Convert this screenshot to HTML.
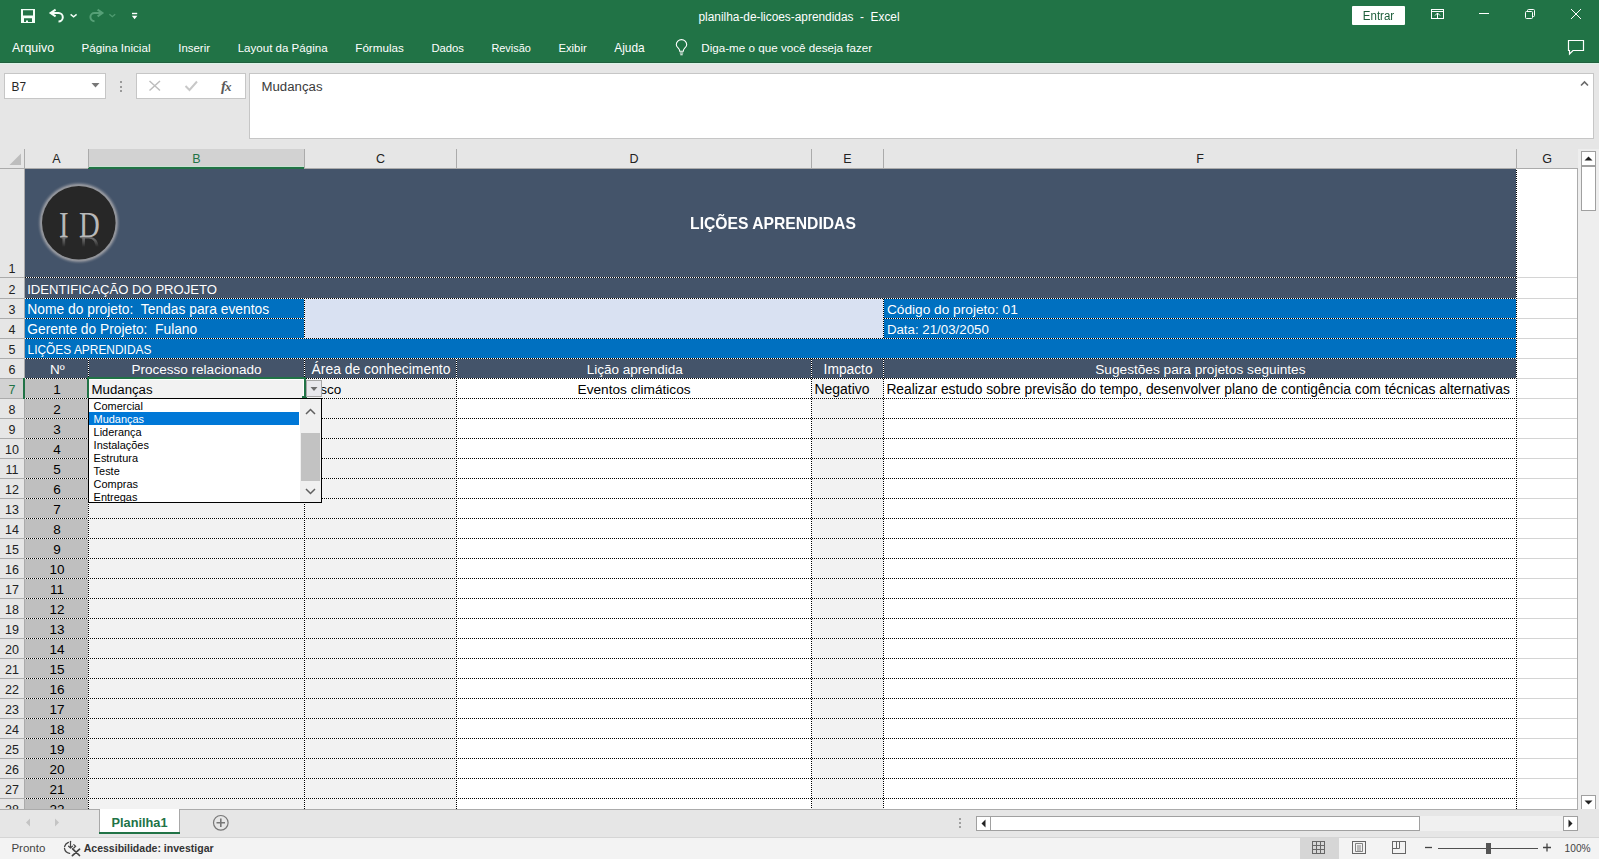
<!DOCTYPE html>
<html><head><meta charset="utf-8"><title>planilha-de-licoes-aprendidas - Excel</title>
<style>
html,body{margin:0;padding:0;}
body{width:1599px;height:859px;overflow:hidden;position:relative;background:#E6E6E6;font-family:"Liberation Sans",sans-serif;}
body>div{position:absolute;}
.t{white-space:pre;}
.hd{height:1px;}
.vd{width:1px;}
svg{position:absolute;}
</style></head><body>
<div style="left:0px;top:0px;width:1599px;height:63px;background:#217346"></div>
<div style="left:0px;top:62px;width:1599px;height:1px;background:#225F3E"></div>
<div style="left:0px;top:63px;width:1599px;height:1px;background:#DBF4E7"></div>
<svg style="position:absolute;left:0px;top:0px" width="160" height="32">
<path fill="#F4FFF8" fill-rule="evenodd" d="M21 9 H35 V23 H21 Z M23 10.2 H33 V15.6 H23 Z M24 18.2 H32 V22 H28 V20.6 H26 V22 H24 Z"/>
<path d="M55.6 9.6 L50.6 13 L55.6 16.4 M51.5 13 H58.5 A4.3 4.3 0 0 1 58.5 21.6" fill="none" stroke="#F4FFF8" stroke-width="2"/>
<path d="M70.6 14.4 L73.6 16.8 L76.6 14.4" fill="none" stroke="#F4FFF8" stroke-width="1.4"/>
<path d="M97.6 9.6 L102.4 13 L97.6 16.4 M101.5 13 H94.5 A4.1 4.1 0 0 0 94.5 21.2" fill="none" stroke="#56A077" stroke-width="2"/>
<path d="M109.4 14.2 L112.3 16.7 L115.2 14.2" fill="none" stroke="#4E9A6F" stroke-width="1.4"/>
<rect x="132" y="12.8" width="5.2" height="1.4" fill="#fff"/>
<path d="M131.8 15.8 H137.4 L134.6 19.2 Z" fill="#fff"/>
</svg>
<div class="t" style="left:698.5px;top:11.96px;font-size:11.86px;line-height:11.86px;color:#fff;font-weight:400;font-family:'Liberation Sans';white-space:pre">planilha-de-licoes-aprendidas&nbsp; -&nbsp; Excel</div>
<div style="left:1352px;top:6px;width:53px;height:19px;background:#fff;border-radius:1px"></div>
<div class="t" style="left:1348.5px;top:11.27px;width:60px;text-align:center;font-size:11.5px;line-height:11.5px;color:#1D5E3A;font-weight:400;font-family:'Liberation Sans';transform:scaleY(1.08);transform-origin:50% 80%">Entrar</div>
<svg style="position:absolute;left:1420px;top:0px" width="179" height="32">
<g fill="none" stroke="#fff" stroke-width="1">
<rect x="11.5" y="9.5" width="12" height="9"/>
<path d="M11.5 11.5 H23.5"/>
<path d="M17.5 18.5 V13 M15 15.5 L17.5 13 L20 15.5"/>
<path d="M59 13.5 H69"/>
<rect x="105.5" y="11.5" width="7" height="7" rx="1"/>
<path d="M107.5 11.5 V10.5 Q107.5 9.5 108.5 9.5 H113.5 Q114.5 9.5 114.5 10.5 V15.5 Q114.5 16.5 113.5 16.5 H112.5"/>
<path d="M151 9 L161 19 M161 9 L151 19"/>
</g>
</svg>
<div class="t" style="left:12.1px;top:41.51px;font-size:12.39px;line-height:12.39px;color:#fff;font-weight:400;font-family:'Liberation Sans';">Arquivo</div>
<div class="t" style="left:81.5px;top:42.18px;font-size:11.6px;line-height:11.6px;color:#fff;font-weight:400;font-family:'Liberation Sans';">Página Inicial</div>
<div class="t" style="left:178.3px;top:43.34px;font-size:11.41px;line-height:11.41px;color:#fff;font-weight:400;font-family:'Liberation Sans';">Inserir</div>
<div class="t" style="left:237.7px;top:43.21px;font-size:11.56px;line-height:11.56px;color:#fff;font-weight:400;font-family:'Liberation Sans';">Layout da Página</div>
<div class="t" style="left:355.3px;top:42.15px;font-size:11.64px;line-height:11.64px;color:#fff;font-weight:400;font-family:'Liberation Sans';">Fórmulas</div>
<div class="t" style="left:431.4px;top:43.45px;font-size:11.28px;line-height:11.28px;color:#fff;font-weight:400;font-family:'Liberation Sans';">Dados</div>
<div class="t" style="left:491.4px;top:42.75px;font-size:10.93px;line-height:10.93px;color:#fff;font-weight:400;font-family:'Liberation Sans';">Revisão</div>
<div class="t" style="left:558.4px;top:43.42px;font-size:11.32px;line-height:11.32px;color:#fff;font-weight:400;font-family:'Liberation Sans';">Exibir</div>
<div class="t" style="left:614.3px;top:42.94px;font-size:11.89px;line-height:11.89px;color:#fff;font-weight:400;font-family:'Liberation Sans';">Ajuda</div>
<div class="t" style="left:701.3px;top:42.14px;font-size:11.65px;line-height:11.65px;color:#fff;font-weight:400;font-family:'Liberation Sans';">Diga-me o que você deseja fazer</div>
<svg style="position:absolute;left:670px;top:36px" width="24" height="24">
<g fill="none" stroke="#fff" stroke-width="1.1">
<path d="M9.7 15.2 Q9.7 13.6 8.3 12.2 Q6.3 10.3 6.3 8.8 A5.2 5.2 0 0 1 16.7 8.8 Q16.7 10.3 14.7 12.2 Q13.3 13.6 13.3 15.2 Z"/>
<path d="M9.8 17 H13.2 M10.3 18.8 H12.7"/>
</g></svg>
<svg style="position:absolute;left:1560px;top:34px" width="30" height="24">
<path d="M8.5 6.5 H23.5 V16.5 H13 L9.5 20 V16.5 H8.5 Z" fill="none" stroke="#fff" stroke-width="1.2"/>
</svg>
<div style="left:0px;top:64px;width:1599px;height:85px;background:#E6E6E6"></div>
<div style="left:4px;top:73px;width:102px;height:26px;background:#fff;border:1px solid #C6C6C6;box-sizing:border-box"></div>
<div class="t" style="left:11.5px;top:81.97px;font-size:11.85px;line-height:11.85px;color:#262626;font-weight:400;font-family:'Liberation Sans';">B7</div>
<svg style="position:absolute;left:89px;top:80px" width="14" height="10"><path d="M2.5 3 H10.5 L6.5 7.5 Z" fill="#777"/></svg>
<div style="left:120px;top:81px;width:2px;height:2px;background:#9A9A9A"></div>
<div style="left:120px;top:86px;width:2px;height:2px;background:#9A9A9A"></div>
<div style="left:120px;top:90px;width:2px;height:2px;background:#9A9A9A"></div>
<div style="left:136px;top:73px;width:110px;height:26px;background:#fff;border:1px solid #C6C6C6;box-sizing:border-box"></div>
<svg style="position:absolute;left:136px;top:73px" width="110" height="26">
<path d="M13.5 8 L24 17.5 M24 8 L13.5 17.5" stroke="#BDBDBD" stroke-width="1.5" fill="none"/>
<path d="M49.5 13 L53.5 17 L61 8.5" stroke="#C8C8C8" stroke-width="2" fill="none"/>
</svg>
<div class="t" style="left:221px;top:79.3px;font-size:15px;line-height:15px;color:#5A5A5A;font-weight:700;font-family:'Liberation Serif';"><i>f</i><i style='font-size:13px;margin-left:-1px'>x</i></div>
<div style="left:249px;top:73px;width:1345px;height:66px;background:#fff;border:1px solid #C6C6C6;box-sizing:border-box"></div>
<div class="t" style="left:261.5px;top:79.81px;font-size:13.22px;line-height:13.22px;color:#3B3B3B;font-weight:400;font-family:'Liberation Sans';">Mudanças</div>
<svg style="position:absolute;left:1578px;top:78px" width="14" height="12"><path d="M3 7.5 L6.5 4 L10 7.5" fill="none" stroke="#6A6A6A" stroke-width="1.6"/></svg>
<div style="left:0px;top:149px;width:1578px;height:20px;background:#E6E6E6"></div>
<div style="left:0px;top:168px;width:1578px;height:1px;background:#ABABAB"></div>
<svg style="position:absolute;left:0px;top:149px" width="24" height="19"><path d="M9.5 16 L21 16 L21 4.5 Z" fill="#BDBDBD"/></svg>
<div style="left:24px;top:149px;width:1px;height:660px;background:#ABABAB"></div>
<div class="t" style="left:26.5px;top:153.42px;width:60px;text-align:center;font-size:12.5px;line-height:12.5px;color:#222;font-weight:400;font-family:'Liberation Sans';">A</div>
<div style="left:88px;top:149px;width:216px;height:18px;background:#D2D2D2"></div>
<div style="left:88px;top:166px;width:216px;height:1px;background:#C9E3D2"></div>
<div style="left:88px;top:167px;width:216px;height:2px;background:#217346"></div>
<div class="t" style="left:166.5px;top:153.42px;width:60px;text-align:center;font-size:12.5px;line-height:12.5px;color:#217346;font-weight:400;font-family:'Liberation Sans';">B</div>
<div style="left:88px;top:149px;width:1px;height:19px;background:#ABABAB"></div>
<div class="t" style="left:350.5px;top:153.42px;width:60px;text-align:center;font-size:12.5px;line-height:12.5px;color:#222;font-weight:400;font-family:'Liberation Sans';">C</div>
<div style="left:304px;top:149px;width:1px;height:19px;background:#ABABAB"></div>
<div class="t" style="left:604.0px;top:153.42px;width:60px;text-align:center;font-size:12.5px;line-height:12.5px;color:#222;font-weight:400;font-family:'Liberation Sans';">D</div>
<div style="left:456px;top:149px;width:1px;height:19px;background:#ABABAB"></div>
<div class="t" style="left:817.5px;top:153.42px;width:60px;text-align:center;font-size:12.5px;line-height:12.5px;color:#222;font-weight:400;font-family:'Liberation Sans';">E</div>
<div style="left:811px;top:149px;width:1px;height:19px;background:#ABABAB"></div>
<div class="t" style="left:1170.0px;top:153.42px;width:60px;text-align:center;font-size:12.5px;line-height:12.5px;color:#222;font-weight:400;font-family:'Liberation Sans';">F</div>
<div style="left:883px;top:149px;width:1px;height:19px;background:#ABABAB"></div>
<div class="t" style="left:1517.0px;top:153.42px;width:60px;text-align:center;font-size:12.5px;line-height:12.5px;color:#222;font-weight:400;font-family:'Liberation Sans';">G</div>
<div style="left:1516px;top:149px;width:1px;height:19px;background:#ABABAB"></div>
<div style="left:25px;top:169px;width:1553px;height:640px;background:#fff"></div>
<div style="left:0px;top:169px;width:24px;height:640px;background:#E6E6E6"></div>
<div style="left:0px;top:277px;width:24px;height:1px;background:#ABABAB"></div>
<div class="t" style="left:-3.0px;top:263.42px;width:30px;text-align:center;font-size:12.5px;line-height:12.5px;color:#222;font-weight:400;font-family:'Liberation Sans';">1</div>
<div style="left:0px;top:298px;width:24px;height:1px;background:#ABABAB"></div>
<div class="t" style="left:-3.0px;top:284.42px;width:30px;text-align:center;font-size:12.5px;line-height:12.5px;color:#222;font-weight:400;font-family:'Liberation Sans';">2</div>
<div style="left:0px;top:318px;width:24px;height:1px;background:#ABABAB"></div>
<div class="t" style="left:-3.0px;top:304.42px;width:30px;text-align:center;font-size:12.5px;line-height:12.5px;color:#222;font-weight:400;font-family:'Liberation Sans';">3</div>
<div style="left:0px;top:338px;width:24px;height:1px;background:#ABABAB"></div>
<div class="t" style="left:-3.0px;top:324.42px;width:30px;text-align:center;font-size:12.5px;line-height:12.5px;color:#222;font-weight:400;font-family:'Liberation Sans';">4</div>
<div style="left:0px;top:358px;width:24px;height:1px;background:#ABABAB"></div>
<div class="t" style="left:-3.0px;top:344.42px;width:30px;text-align:center;font-size:12.5px;line-height:12.5px;color:#222;font-weight:400;font-family:'Liberation Sans';">5</div>
<div style="left:0px;top:378px;width:24px;height:1px;background:#ABABAB"></div>
<div class="t" style="left:-3.0px;top:364.42px;width:30px;text-align:center;font-size:12.5px;line-height:12.5px;color:#222;font-weight:400;font-family:'Liberation Sans';">6</div>
<div style="left:0px;top:398px;width:24px;height:1px;background:#ABABAB"></div>
<div style="left:0px;top:379px;width:23px;height:19px;background:#D2D2D2"></div>
<div style="left:23px;top:378px;width:2px;height:21px;background:#217346"></div>
<div class="t" style="left:-3.0px;top:384.42px;width:30px;text-align:center;font-size:12.5px;line-height:12.5px;color:#217346;font-weight:400;font-family:'Liberation Sans';">7</div>
<div style="left:0px;top:418px;width:24px;height:1px;background:#ABABAB"></div>
<div class="t" style="left:-3.0px;top:404.42px;width:30px;text-align:center;font-size:12.5px;line-height:12.5px;color:#222;font-weight:400;font-family:'Liberation Sans';">8</div>
<div style="left:0px;top:438px;width:24px;height:1px;background:#ABABAB"></div>
<div class="t" style="left:-3.0px;top:424.42px;width:30px;text-align:center;font-size:12.5px;line-height:12.5px;color:#222;font-weight:400;font-family:'Liberation Sans';">9</div>
<div style="left:0px;top:458px;width:24px;height:1px;background:#ABABAB"></div>
<div class="t" style="left:-3.0px;top:444.42px;width:30px;text-align:center;font-size:12.5px;line-height:12.5px;color:#222;font-weight:400;font-family:'Liberation Sans';">10</div>
<div style="left:0px;top:478px;width:24px;height:1px;background:#ABABAB"></div>
<div class="t" style="left:-3.0px;top:464.42px;width:30px;text-align:center;font-size:12.5px;line-height:12.5px;color:#222;font-weight:400;font-family:'Liberation Sans';">11</div>
<div style="left:0px;top:498px;width:24px;height:1px;background:#ABABAB"></div>
<div class="t" style="left:-3.0px;top:484.42px;width:30px;text-align:center;font-size:12.5px;line-height:12.5px;color:#222;font-weight:400;font-family:'Liberation Sans';">12</div>
<div style="left:0px;top:518px;width:24px;height:1px;background:#ABABAB"></div>
<div class="t" style="left:-3.0px;top:504.42px;width:30px;text-align:center;font-size:12.5px;line-height:12.5px;color:#222;font-weight:400;font-family:'Liberation Sans';">13</div>
<div style="left:0px;top:538px;width:24px;height:1px;background:#ABABAB"></div>
<div class="t" style="left:-3.0px;top:524.42px;width:30px;text-align:center;font-size:12.5px;line-height:12.5px;color:#222;font-weight:400;font-family:'Liberation Sans';">14</div>
<div style="left:0px;top:558px;width:24px;height:1px;background:#ABABAB"></div>
<div class="t" style="left:-3.0px;top:544.42px;width:30px;text-align:center;font-size:12.5px;line-height:12.5px;color:#222;font-weight:400;font-family:'Liberation Sans';">15</div>
<div style="left:0px;top:578px;width:24px;height:1px;background:#ABABAB"></div>
<div class="t" style="left:-3.0px;top:564.42px;width:30px;text-align:center;font-size:12.5px;line-height:12.5px;color:#222;font-weight:400;font-family:'Liberation Sans';">16</div>
<div style="left:0px;top:598px;width:24px;height:1px;background:#ABABAB"></div>
<div class="t" style="left:-3.0px;top:584.42px;width:30px;text-align:center;font-size:12.5px;line-height:12.5px;color:#222;font-weight:400;font-family:'Liberation Sans';">17</div>
<div style="left:0px;top:618px;width:24px;height:1px;background:#ABABAB"></div>
<div class="t" style="left:-3.0px;top:604.42px;width:30px;text-align:center;font-size:12.5px;line-height:12.5px;color:#222;font-weight:400;font-family:'Liberation Sans';">18</div>
<div style="left:0px;top:638px;width:24px;height:1px;background:#ABABAB"></div>
<div class="t" style="left:-3.0px;top:624.42px;width:30px;text-align:center;font-size:12.5px;line-height:12.5px;color:#222;font-weight:400;font-family:'Liberation Sans';">19</div>
<div style="left:0px;top:658px;width:24px;height:1px;background:#ABABAB"></div>
<div class="t" style="left:-3.0px;top:644.42px;width:30px;text-align:center;font-size:12.5px;line-height:12.5px;color:#222;font-weight:400;font-family:'Liberation Sans';">20</div>
<div style="left:0px;top:678px;width:24px;height:1px;background:#ABABAB"></div>
<div class="t" style="left:-3.0px;top:664.42px;width:30px;text-align:center;font-size:12.5px;line-height:12.5px;color:#222;font-weight:400;font-family:'Liberation Sans';">21</div>
<div style="left:0px;top:698px;width:24px;height:1px;background:#ABABAB"></div>
<div class="t" style="left:-3.0px;top:684.42px;width:30px;text-align:center;font-size:12.5px;line-height:12.5px;color:#222;font-weight:400;font-family:'Liberation Sans';">22</div>
<div style="left:0px;top:718px;width:24px;height:1px;background:#ABABAB"></div>
<div class="t" style="left:-3.0px;top:704.42px;width:30px;text-align:center;font-size:12.5px;line-height:12.5px;color:#222;font-weight:400;font-family:'Liberation Sans';">23</div>
<div style="left:0px;top:738px;width:24px;height:1px;background:#ABABAB"></div>
<div class="t" style="left:-3.0px;top:724.42px;width:30px;text-align:center;font-size:12.5px;line-height:12.5px;color:#222;font-weight:400;font-family:'Liberation Sans';">24</div>
<div style="left:0px;top:758px;width:24px;height:1px;background:#ABABAB"></div>
<div class="t" style="left:-3.0px;top:744.42px;width:30px;text-align:center;font-size:12.5px;line-height:12.5px;color:#222;font-weight:400;font-family:'Liberation Sans';">25</div>
<div style="left:0px;top:778px;width:24px;height:1px;background:#ABABAB"></div>
<div class="t" style="left:-3.0px;top:764.42px;width:30px;text-align:center;font-size:12.5px;line-height:12.5px;color:#222;font-weight:400;font-family:'Liberation Sans';">26</div>
<div style="left:0px;top:798px;width:24px;height:1px;background:#ABABAB"></div>
<div class="t" style="left:-3.0px;top:784.42px;width:30px;text-align:center;font-size:12.5px;line-height:12.5px;color:#222;font-weight:400;font-family:'Liberation Sans';">27</div>
<div class="t" style="left:-3.0px;top:804.42px;width:30px;text-align:center;font-size:12.5px;line-height:12.5px;color:#222;font-weight:400;font-family:'Liberation Sans';">28</div>
<div style="left:1517px;top:277px;width:60px;height:1px;background:#D4D4D4"></div>
<div style="left:1517px;top:298px;width:60px;height:1px;background:#D4D4D4"></div>
<div style="left:1517px;top:318px;width:60px;height:1px;background:#D4D4D4"></div>
<div style="left:1517px;top:338px;width:60px;height:1px;background:#D4D4D4"></div>
<div style="left:1517px;top:358px;width:60px;height:1px;background:#D4D4D4"></div>
<div style="left:1517px;top:378px;width:60px;height:1px;background:#D4D4D4"></div>
<div style="left:1517px;top:398px;width:60px;height:1px;background:#D4D4D4"></div>
<div style="left:1517px;top:418px;width:60px;height:1px;background:#D4D4D4"></div>
<div style="left:1517px;top:438px;width:60px;height:1px;background:#D4D4D4"></div>
<div style="left:1517px;top:458px;width:60px;height:1px;background:#D4D4D4"></div>
<div style="left:1517px;top:478px;width:60px;height:1px;background:#D4D4D4"></div>
<div style="left:1517px;top:498px;width:60px;height:1px;background:#D4D4D4"></div>
<div style="left:1517px;top:518px;width:60px;height:1px;background:#D4D4D4"></div>
<div style="left:1517px;top:538px;width:60px;height:1px;background:#D4D4D4"></div>
<div style="left:1517px;top:558px;width:60px;height:1px;background:#D4D4D4"></div>
<div style="left:1517px;top:578px;width:60px;height:1px;background:#D4D4D4"></div>
<div style="left:1517px;top:598px;width:60px;height:1px;background:#D4D4D4"></div>
<div style="left:1517px;top:618px;width:60px;height:1px;background:#D4D4D4"></div>
<div style="left:1517px;top:638px;width:60px;height:1px;background:#D4D4D4"></div>
<div style="left:1517px;top:658px;width:60px;height:1px;background:#D4D4D4"></div>
<div style="left:1517px;top:678px;width:60px;height:1px;background:#D4D4D4"></div>
<div style="left:1517px;top:698px;width:60px;height:1px;background:#D4D4D4"></div>
<div style="left:1517px;top:718px;width:60px;height:1px;background:#D4D4D4"></div>
<div style="left:1517px;top:738px;width:60px;height:1px;background:#D4D4D4"></div>
<div style="left:1517px;top:758px;width:60px;height:1px;background:#D4D4D4"></div>
<div style="left:1517px;top:778px;width:60px;height:1px;background:#D4D4D4"></div>
<div style="left:1517px;top:798px;width:60px;height:1px;background:#D4D4D4"></div>
<div style="left:25px;top:169px;width:1491px;height:130px;background:#44546A"></div>
<div style="left:25px;top:299px;width:279px;height:40px;background:#0070C0"></div>
<div style="left:304px;top:299px;width:579px;height:40px;background:#D9E1F2"></div>
<div style="left:883px;top:299px;width:633px;height:40px;background:#0070C0"></div>
<div style="left:25px;top:339px;width:1491px;height:20px;background:#0070C0"></div>
<div style="left:25px;top:359px;width:1491px;height:20px;background:#44546A"></div>
<div style="left:25px;top:379px;width:63px;height:430px;background:#BFBFBF"></div>
<div style="left:88px;top:379px;width:216px;height:430px;background:#F2F2F2"></div>
<div style="left:304px;top:379px;width:152px;height:430px;background:#F2F2F2"></div>
<div style="left:811px;top:379px;width:72px;height:430px;background:#F2F2F2"></div>
<div class="hd" style="left:25px;top:277px;width:1492px;background:repeating-linear-gradient(90deg,#000 0 1px,#fff 1px 2px)"></div>
<div class="hd" style="left:25px;top:298px;width:1492px;background:repeating-linear-gradient(90deg,#fff 0 1px,#000 1px 2px)"></div>
<div class="hd" style="left:25px;top:318px;width:280px;background:repeating-linear-gradient(90deg,#fff 0 1px,#000 1px 2px)"></div>
<div class="hd" style="left:883px;top:318px;width:634px;background:repeating-linear-gradient(90deg,#fff 0 1px,#000 1px 2px)"></div>
<div class="hd" style="left:25px;top:338px;width:1492px;background:repeating-linear-gradient(90deg,#fff 0 1px,#000 1px 2px)"></div>
<div class="hd" style="left:25px;top:358px;width:1492px;background:repeating-linear-gradient(90deg,#fff 0 1px,#000 1px 2px)"></div>
<div class="hd" style="left:25px;top:378px;width:1492px;background:repeating-linear-gradient(90deg,#fff 0 1px,#000 1px 2px)"></div>
<div class="hd" style="left:25px;top:398px;width:1492px;background:repeating-linear-gradient(90deg,#fff 0 1px,#000 1px 2px)"></div>
<div class="hd" style="left:25px;top:418px;width:1492px;background:repeating-linear-gradient(90deg,#fff 0 1px,#000 1px 2px)"></div>
<div class="hd" style="left:25px;top:438px;width:1492px;background:repeating-linear-gradient(90deg,#fff 0 1px,#000 1px 2px)"></div>
<div class="hd" style="left:25px;top:458px;width:1492px;background:repeating-linear-gradient(90deg,#fff 0 1px,#000 1px 2px)"></div>
<div class="hd" style="left:25px;top:478px;width:1492px;background:repeating-linear-gradient(90deg,#fff 0 1px,#000 1px 2px)"></div>
<div class="hd" style="left:25px;top:498px;width:1492px;background:repeating-linear-gradient(90deg,#fff 0 1px,#000 1px 2px)"></div>
<div class="hd" style="left:25px;top:518px;width:1492px;background:repeating-linear-gradient(90deg,#fff 0 1px,#000 1px 2px)"></div>
<div class="hd" style="left:25px;top:538px;width:1492px;background:repeating-linear-gradient(90deg,#fff 0 1px,#000 1px 2px)"></div>
<div class="hd" style="left:25px;top:558px;width:1492px;background:repeating-linear-gradient(90deg,#fff 0 1px,#000 1px 2px)"></div>
<div class="hd" style="left:25px;top:578px;width:1492px;background:repeating-linear-gradient(90deg,#fff 0 1px,#000 1px 2px)"></div>
<div class="hd" style="left:25px;top:598px;width:1492px;background:repeating-linear-gradient(90deg,#fff 0 1px,#000 1px 2px)"></div>
<div class="hd" style="left:25px;top:618px;width:1492px;background:repeating-linear-gradient(90deg,#fff 0 1px,#000 1px 2px)"></div>
<div class="hd" style="left:25px;top:638px;width:1492px;background:repeating-linear-gradient(90deg,#fff 0 1px,#000 1px 2px)"></div>
<div class="hd" style="left:25px;top:658px;width:1492px;background:repeating-linear-gradient(90deg,#fff 0 1px,#000 1px 2px)"></div>
<div class="hd" style="left:25px;top:678px;width:1492px;background:repeating-linear-gradient(90deg,#fff 0 1px,#000 1px 2px)"></div>
<div class="hd" style="left:25px;top:698px;width:1492px;background:repeating-linear-gradient(90deg,#fff 0 1px,#000 1px 2px)"></div>
<div class="hd" style="left:25px;top:718px;width:1492px;background:repeating-linear-gradient(90deg,#fff 0 1px,#000 1px 2px)"></div>
<div class="hd" style="left:25px;top:738px;width:1492px;background:repeating-linear-gradient(90deg,#fff 0 1px,#000 1px 2px)"></div>
<div class="hd" style="left:25px;top:758px;width:1492px;background:repeating-linear-gradient(90deg,#fff 0 1px,#000 1px 2px)"></div>
<div class="hd" style="left:25px;top:778px;width:1492px;background:repeating-linear-gradient(90deg,#fff 0 1px,#000 1px 2px)"></div>
<div class="hd" style="left:25px;top:798px;width:1492px;background:repeating-linear-gradient(90deg,#fff 0 1px,#000 1px 2px)"></div>
<div class="vd" style="left:1516px;top:169px;height:640px;background:repeating-linear-gradient(180deg,#fff 0 1px,#000 1px 2px)"></div>
<div class="vd" style="left:304px;top:299px;height:40px;background:repeating-linear-gradient(180deg,#fff 0 1px,#000 1px 2px)"></div>
<div class="vd" style="left:883px;top:299px;height:40px;background:repeating-linear-gradient(180deg,#000 0 1px,#fff 1px 2px)"></div>
<div class="vd" style="left:88px;top:359px;height:450px;background:repeating-linear-gradient(180deg,#fff 0 1px,#000 1px 2px)"></div>
<div class="vd" style="left:304px;top:359px;height:450px;background:repeating-linear-gradient(180deg,#fff 0 1px,#000 1px 2px)"></div>
<div class="vd" style="left:456px;top:359px;height:450px;background:repeating-linear-gradient(180deg,#fff 0 1px,#000 1px 2px)"></div>
<div class="vd" style="left:811px;top:359px;height:450px;background:repeating-linear-gradient(180deg,#000 0 1px,#fff 1px 2px)"></div>
<div class="vd" style="left:883px;top:359px;height:450px;background:repeating-linear-gradient(180deg,#000 0 1px,#fff 1px 2px)"></div>
<svg style="position:absolute;left:30px;top:175px" width="100" height="100">
<defs>
<radialGradient id="ring" cx="48.8" cy="47.8" r="42" gradientUnits="userSpaceOnUse">
<stop offset="0.84" stop-color="#a0a0a0"/>
<stop offset="0.91" stop-color="#8c9099"/>
<stop offset="1" stop-color="#44546A" stop-opacity="0"/>
</radialGradient>
<linearGradient id="fade" x1="0" y1="61.5" x2="0" y2="72" gradientUnits="userSpaceOnUse">
<stop offset="0" stop-color="#fff" stop-opacity="0.6"/>
<stop offset="1" stop-color="#fff" stop-opacity="0"/>
</linearGradient>
<mask id="rm"><rect x="0" y="61.5" width="100" height="12" fill="url(#fade)"/></mask>
</defs>
<circle cx="48.8" cy="47.8" r="42" fill="url(#ring)"/>
<circle cx="48.8" cy="47.8" r="36.8" fill="#272727"/>
<g fill="#B8B8B8" font-family="Liberation Serif" font-size="36">
<text transform="translate(29,61.5) scale(0.8,1)">I</text>
<text transform="translate(49,61.5) scale(0.8,1)">D</text>
</g>
<g mask="url(#rm)"><g fill="#B8B8B8" font-family="Liberation Serif" font-size="36" transform="translate(0,123) scale(1,-1)">
<text transform="translate(29,61.5) scale(0.8,1)">I</text>
<text transform="translate(49,61.5) scale(0.8,1)">D</text>
</g></g>
</svg>
<div class="t" style="left:572.8px;top:215.03px;width:400px;text-align:center;font-size:16.5px;line-height:16.5px;color:#fff;font-weight:700;font-family:'Liberation Sans';transform:scaleX(0.95)">LIÇÕES APRENDIDAS</div>
<div class="t" style="left:27.2px;top:282.89px;font-size:13.12px;line-height:13.12px;color:#fff;font-weight:400;font-family:'Liberation Sans';">IDENTIFICAÇÃO DO PROJETO</div>
<div class="t" style="left:27.3px;top:303.29px;font-size:13.83px;line-height:13.83px;color:#fff;font-weight:400;font-family:'Liberation Sans';">Nome do projeto:&nbsp; Tendas para eventos</div>
<div class="t" style="left:27.3px;top:323.34px;font-size:13.78px;line-height:13.78px;color:#fff;font-weight:400;font-family:'Liberation Sans';">Gerente do Projeto:&nbsp; Fulano</div>
<div class="t" style="left:886.9px;top:303.4px;font-size:13.7px;line-height:13.7px;color:#fff;font-weight:400;font-family:'Liberation Sans';">Código do projeto: 01</div>
<div class="t" style="left:886.9px;top:322.75px;font-size:13.29px;line-height:13.29px;color:#fff;font-weight:400;font-family:'Liberation Sans';">Data: 21/03/2050</div>
<div class="t" style="left:27.5px;top:344.9px;font-size:11.93px;line-height:11.93px;color:#fff;font-weight:400;font-family:'Liberation Sans';">LIÇÕES APRENDIDAS</div>
<div class="t" style="left:27.4px;top:362.57px;width:60px;text-align:center;font-size:13.5px;line-height:13.5px;color:#fff;font-weight:400;font-family:'Liberation Sans';">Nº</div>
<div class="t" style="left:86.5px;top:362.56px;width:220px;text-align:center;font-size:13.52px;line-height:13.52px;color:#fff;font-weight:400;font-family:'Liberation Sans';">Processo relacionado</div>
<div class="t" style="left:301.0px;top:363.24px;width:160px;text-align:center;font-size:13.89px;line-height:13.89px;color:#fff;font-weight:400;font-family:'Liberation Sans';">Área de conhecimento</div>
<div class="t" style="left:484.70000000000005px;top:362.58px;width:300px;text-align:center;font-size:13.49px;line-height:13.49px;color:#fff;font-weight:400;font-family:'Liberation Sans';">Lição aprendida</div>
<div class="t" style="left:808.1px;top:363.34px;width:80px;text-align:center;font-size:13.77px;line-height:13.77px;color:#fff;font-weight:400;font-family:'Liberation Sans';">Impacto</div>
<div class="t" style="left:1000.4000000000001px;top:363.43px;width:400px;text-align:center;font-size:13.67px;line-height:13.67px;color:#fff;font-weight:400;font-family:'Liberation Sans';">Sugestões para projetos seguintes</div>
<div class="t" style="left:91.6px;top:382.81px;font-size:13.22px;line-height:13.22px;color:#000;font-weight:400;font-family:'Liberation Sans';">Mudanças</div>
<div class="t" style="left:307.5px;top:382.57px;font-size:13.5px;line-height:13.5px;color:#000;font-weight:400;font-family:'Liberation Sans';">Risco</div>
<div class="t" style="left:484.1px;top:383.45px;width:300px;text-align:center;font-size:13.65px;line-height:13.65px;color:#000;font-weight:400;font-family:'Liberation Sans';">Eventos climáticos</div>
<div class="t" style="left:814.5px;top:383.2px;font-size:13.94px;line-height:13.94px;color:#000;font-weight:400;font-family:'Liberation Sans';">Negativo</div>
<div class="t" style="left:886.4px;top:383.3px;font-size:13.82px;line-height:13.82px;color:#000;font-weight:400;font-family:'Liberation Sans';white-space:pre">Realizar estudo sobre previsão do tempo, desenvolver plano de contigência com técnicas alternativas</div>
<div class="t" style="left:27.0px;top:382.57px;width:60px;text-align:center;font-size:13.5px;line-height:13.5px;color:#000;font-weight:400;font-family:'Liberation Sans';">1</div>
<div class="t" style="left:27.0px;top:402.57px;width:60px;text-align:center;font-size:13.5px;line-height:13.5px;color:#000;font-weight:400;font-family:'Liberation Sans';">2</div>
<div class="t" style="left:27.0px;top:422.57px;width:60px;text-align:center;font-size:13.5px;line-height:13.5px;color:#000;font-weight:400;font-family:'Liberation Sans';">3</div>
<div class="t" style="left:27.0px;top:442.57px;width:60px;text-align:center;font-size:13.5px;line-height:13.5px;color:#000;font-weight:400;font-family:'Liberation Sans';">4</div>
<div class="t" style="left:27.0px;top:462.57px;width:60px;text-align:center;font-size:13.5px;line-height:13.5px;color:#000;font-weight:400;font-family:'Liberation Sans';">5</div>
<div class="t" style="left:27.0px;top:482.57px;width:60px;text-align:center;font-size:13.5px;line-height:13.5px;color:#000;font-weight:400;font-family:'Liberation Sans';">6</div>
<div class="t" style="left:27.0px;top:502.57px;width:60px;text-align:center;font-size:13.5px;line-height:13.5px;color:#000;font-weight:400;font-family:'Liberation Sans';">7</div>
<div class="t" style="left:27.0px;top:522.57px;width:60px;text-align:center;font-size:13.5px;line-height:13.5px;color:#000;font-weight:400;font-family:'Liberation Sans';">8</div>
<div class="t" style="left:27.0px;top:542.57px;width:60px;text-align:center;font-size:13.5px;line-height:13.5px;color:#000;font-weight:400;font-family:'Liberation Sans';">9</div>
<div class="t" style="left:27.0px;top:562.57px;width:60px;text-align:center;font-size:13.5px;line-height:13.5px;color:#000;font-weight:400;font-family:'Liberation Sans';">10</div>
<div class="t" style="left:27.0px;top:582.57px;width:60px;text-align:center;font-size:13.5px;line-height:13.5px;color:#000;font-weight:400;font-family:'Liberation Sans';">11</div>
<div class="t" style="left:27.0px;top:602.57px;width:60px;text-align:center;font-size:13.5px;line-height:13.5px;color:#000;font-weight:400;font-family:'Liberation Sans';">12</div>
<div class="t" style="left:27.0px;top:622.57px;width:60px;text-align:center;font-size:13.5px;line-height:13.5px;color:#000;font-weight:400;font-family:'Liberation Sans';">13</div>
<div class="t" style="left:27.0px;top:642.57px;width:60px;text-align:center;font-size:13.5px;line-height:13.5px;color:#000;font-weight:400;font-family:'Liberation Sans';">14</div>
<div class="t" style="left:27.0px;top:662.57px;width:60px;text-align:center;font-size:13.5px;line-height:13.5px;color:#000;font-weight:400;font-family:'Liberation Sans';">15</div>
<div class="t" style="left:27.0px;top:682.57px;width:60px;text-align:center;font-size:13.5px;line-height:13.5px;color:#000;font-weight:400;font-family:'Liberation Sans';">16</div>
<div class="t" style="left:27.0px;top:702.57px;width:60px;text-align:center;font-size:13.5px;line-height:13.5px;color:#000;font-weight:400;font-family:'Liberation Sans';">17</div>
<div class="t" style="left:27.0px;top:722.57px;width:60px;text-align:center;font-size:13.5px;line-height:13.5px;color:#000;font-weight:400;font-family:'Liberation Sans';">18</div>
<div class="t" style="left:27.0px;top:742.57px;width:60px;text-align:center;font-size:13.5px;line-height:13.5px;color:#000;font-weight:400;font-family:'Liberation Sans';">19</div>
<div class="t" style="left:27.0px;top:762.57px;width:60px;text-align:center;font-size:13.5px;line-height:13.5px;color:#000;font-weight:400;font-family:'Liberation Sans';">20</div>
<div class="t" style="left:27.0px;top:782.57px;width:60px;text-align:center;font-size:13.5px;line-height:13.5px;color:#000;font-weight:400;font-family:'Liberation Sans';">21</div>
<div class="t" style="left:27.0px;top:802.57px;width:60px;text-align:center;font-size:13.5px;line-height:13.5px;color:#000;font-weight:400;font-family:'Liberation Sans';">22</div>
<div style="left:87px;top:377px;width:219px;height:2px;background:#217346"></div>
<div style="left:87px;top:377px;width:2px;height:21px;background:#217346"></div>
<div style="left:304px;top:377px;width:2px;height:21px;background:#217346"></div>
<div style="left:89px;top:379px;width:215px;height:1px;background:#fff"></div>
<div style="left:303px;top:379px;width:1px;height:18px;background:#fff"></div>
<div style="left:302px;top:396px;width:5px;height:3px;background:#217346"></div>
<div style="left:306px;top:380px;width:16px;height:17px;background:#E8E8EC;border:1px solid #A6A6A6;box-sizing:border-box"></div>
<svg style="position:absolute;left:306px;top:380px" width="16" height="17"><path d="M4.5 7 H11.5 L8 11 Z" fill="#6D6D6D"/></svg>
<div style="left:88px;top:398px;width:234px;height:105px;background:#fff;border:1px solid #000;box-sizing:border-box"></div>
<div style="left:89px;top:412px;width:210px;height:13px;background:#0078D7"></div>
<div class="t" style="left:93.6px;top:400.73px;font-size:10.95px;line-height:10.95px;color:#000;font-weight:400;font-family:'Liberation Sans';">Comercial</div>
<div class="t" style="left:93.6px;top:413.73px;font-size:10.95px;line-height:10.95px;color:#fff;font-weight:400;font-family:'Liberation Sans';">Mudanças</div>
<div class="t" style="left:93.6px;top:426.73px;font-size:10.95px;line-height:10.95px;color:#000;font-weight:400;font-family:'Liberation Sans';">Liderança</div>
<div class="t" style="left:93.6px;top:439.73px;font-size:10.95px;line-height:10.95px;color:#000;font-weight:400;font-family:'Liberation Sans';">Instalações</div>
<div class="t" style="left:93.6px;top:452.73px;font-size:10.95px;line-height:10.95px;color:#000;font-weight:400;font-family:'Liberation Sans';">Estrutura</div>
<div class="t" style="left:93.6px;top:465.73px;font-size:10.95px;line-height:10.95px;color:#000;font-weight:400;font-family:'Liberation Sans';">Teste</div>
<div class="t" style="left:93.6px;top:478.73px;font-size:10.95px;line-height:10.95px;color:#000;font-weight:400;font-family:'Liberation Sans';">Compras</div>
<div class="t" style="left:93.6px;top:491.73px;font-size:10.95px;line-height:10.95px;color:#000;font-weight:400;font-family:'Liberation Sans';">Entregas</div>
<div style="left:300px;top:399px;width:21px;height:103px;background:#F0F0F0"></div>
<div style="left:301px;top:433px;width:19px;height:48px;background:#C2C2C2"></div>
<svg style="position:absolute;left:300px;top:399px" width="21" height="103">
<path d="M6 15 L10.5 10.5 L15 15" fill="none" stroke="#606060" stroke-width="1.5"/>
<path d="M6 90 L10.5 94.5 L15 90" fill="none" stroke="#606060" stroke-width="1.5"/>
</svg>
<div style="left:1577px;top:168px;width:1px;height:642px;background:#ABABAB"></div>
<div style="left:1578px;top:149px;width:21px;height:661px;background:#EEEEEE"></div>
<div style="left:1581px;top:151px;width:15px;height:15px;background:#fff;border:1px solid #A0A0A0;box-sizing:border-box"></div>
<svg style="position:absolute;left:1581px;top:151px" width="15" height="15"><path d="M3.5 9.5 H11.5 L7.5 5.5 Z" fill="#222"/></svg>
<div style="left:1581px;top:166px;width:15px;height:45px;background:#fff;border:1px solid #A0A0A0;box-sizing:border-box"></div>
<div style="left:1581px;top:795px;width:15px;height:15px;background:#fff;border:1px solid #A0A0A0;box-sizing:border-box"></div>
<svg style="position:absolute;left:1581px;top:795px" width="15" height="15"><path d="M3.5 5.5 H11.5 L7.5 9.5 Z" fill="#222"/></svg>
<div style="left:0px;top:809px;width:1599px;height:28px;background:#E6E6E6"></div>
<div style="left:0px;top:809px;width:1578px;height:1px;background:#ABABAB"></div>
<svg style="position:absolute;left:0px;top:809px" width="260" height="28">
<path d="M30 9.5 L26 13.5 L30 17.5 Z" fill="#C4C4C4"/>
<path d="M55 9.5 L59 13.5 L55 17.5 Z" fill="#C4C4C4"/>
<circle cx="220.8" cy="13.8" r="7.3" fill="none" stroke="#777" stroke-width="1.2"/>
<path d="M220.8 9.5 V18 M216.5 13.8 H225" stroke="#777" stroke-width="1.6"/>
</svg>
<div style="left:99px;top:809px;width:81px;height:25px;background:#fff"></div>
<div style="left:99px;top:832px;width:81px;height:2px;background:#217346"></div>
<div style="left:99px;top:809px;width:1px;height:23px;background:#A8A8A8"></div>
<div style="left:179px;top:809px;width:1px;height:23px;background:#A8A8A8"></div>
<div class="t" style="left:111.5px;top:817.21px;font-size:12.75px;line-height:12.75px;color:#217346;font-weight:700;font-family:'Liberation Sans';">Planilha1</div>
<div style="left:959px;top:818px;width:2px;height:2px;background:#A0A0A0"></div>
<div style="left:959px;top:822px;width:2px;height:2px;background:#A0A0A0"></div>
<div style="left:959px;top:826px;width:2px;height:2px;background:#A0A0A0"></div>
<div style="left:976px;top:816px;width:602px;height:15px;background:#F0F0F0"></div>
<div style="left:976px;top:816px;width:15px;height:15px;background:#fff;border:1px solid #A0A0A0;box-sizing:border-box"></div>
<svg style="position:absolute;left:976px;top:816px" width="15" height="15"><path d="M9.5 3.5 V11.5 L5.5 7.5 Z" fill="#222"/></svg>
<div style="left:990px;top:816px;width:430px;height:15px;background:#fff;border:1px solid #A0A0A0;box-sizing:border-box"></div>
<div style="left:1563px;top:816px;width:15px;height:15px;background:#fff;border:1px solid #A0A0A0;box-sizing:border-box"></div>
<svg style="position:absolute;left:1563px;top:816px" width="15" height="15"><path d="M5.5 3.5 V11.5 L9.5 7.5 Z" fill="#222"/></svg>
<div style="left:0px;top:837px;width:1599px;height:22px;background:#F3F3F3"></div>
<div style="left:0px;top:837px;width:1599px;height:1px;background:#D5D5D5"></div>
<div class="t" style="left:11.4px;top:843.23px;font-size:11.54px;line-height:11.54px;color:#444;font-weight:400;font-family:'Liberation Sans';">Pronto</div>
<svg style="position:absolute;left:60px;top:839px" width="24" height="20">
<g fill="none" stroke="#444" stroke-linecap="round">
<path d="M4.6 7.5 Q5.4 4.6 8.4 3.4" stroke-width="1.3"/>
<path d="M4.5 9.4 Q5.2 13.6 9.6 14.4" stroke-width="1.3"/>
<path d="M10.5 2.3 V8.6" stroke-width="1.2"/>
<path d="M8.6 7.2 L10.5 9 L12.4 7.2" stroke-width="1.2"/>
<path d="M13.8 5.6 L15.6 7.3 L13.8 9" stroke-width="1.2"/>
<path d="M12.6 9.8 L19.5 16.5 M19.6 10.2 L12.4 16.6" stroke-width="1.7"/>
</g>
</svg>
<div class="t" style="left:83.7px;top:843.08px;font-size:10.54px;line-height:10.54px;color:#333;font-weight:700;font-family:'Liberation Sans';">Acessibilidade: investigar</div>
<div style="left:1300px;top:838px;width:39px;height:21px;background:#D6D6D6"></div>
<svg style="position:absolute;left:1300px;top:838px" width="299" height="21">
<g fill="none" stroke="#666" stroke-width="1">
<rect x="12.5" y="3.5" width="12" height="12"/>
<path d="M16.5 3.5 V15.5 M20.5 3.5 V15.5 M12.5 7.5 H24.5 M12.5 11.5 H24.5"/>
<rect x="52.5" y="3.5" width="13" height="12"/>
<path d="M55.5 5.5 H62.5 V13.5 H55.5 Z M57 8 H61 M57 10 H61 M57 12 H61" stroke-width="0.8"/>
<rect x="92.5" y="3.5" width="13" height="12"/>
<path d="M92.5 10.5 H99.5 V3.5 M96.5 3.5 V10.5"/>
<path d="M125 9.5 H132" stroke="#444" stroke-width="1.3"/>
<path d="M138 10.5 H238" stroke="#505050"/>
<path d="M243 9.5 H251 M247 5.5 V13.5" stroke="#444" stroke-width="1.3"/>
</g>
<rect x="186" y="5" width="5" height="11" fill="#555"/>
</svg>
<div class="t" style="left:1564.6px;top:844.39px;font-size:10.17px;line-height:10.17px;color:#444;font-weight:400;font-family:'Liberation Sans';">100%</div>
</body></html>
